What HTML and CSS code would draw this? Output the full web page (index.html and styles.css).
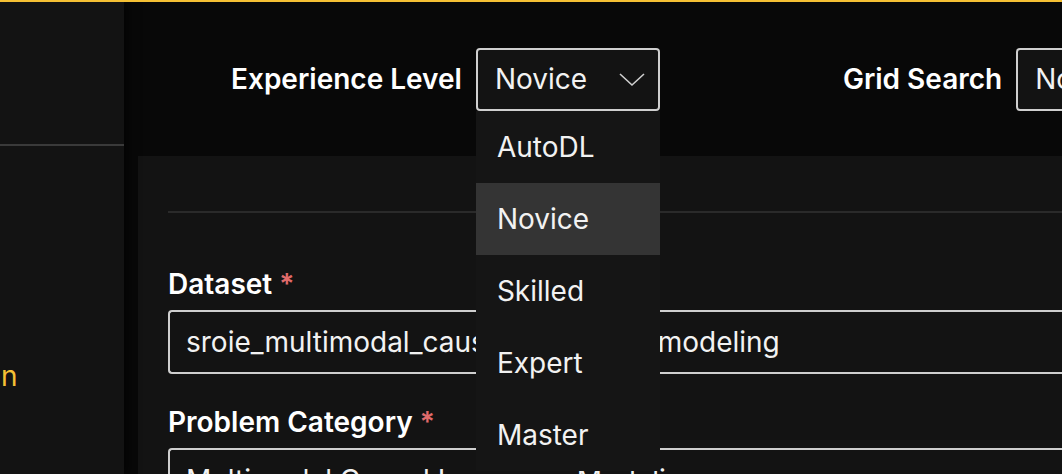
FILE: index.html
```html
<!DOCTYPE html>
<html lang="en">
<head>
  <meta charset="UTF-8">
  <title>Create Experiment</title>
  <link rel="stylesheet" href="styles.css">
</head>
<body>
  <div class="app">
    <aside class="sidebar">
      <div class="brand"></div>
      <nav class="nav">
        <div class="nav-item active"><span>n</span></div>
      </nav>
    </aside>

    <main class="main">
      <header class="toolbar">
        <div class="control">
          <label class="control-label">Experience Level</label>
          <div class="select open">
            <span>Novice</span>
            <svg class="chevron" width="26" height="14" viewBox="0 0 26 14">
              <path d="M1 1 L13 12 L25 1" fill="none" stroke="#cfcfcf" stroke-width="1.6"/>
            </svg>
            <ul class="menu">
              <li>AutoDL</li>
              <li class="selected">Novice</li>
              <li>Skilled</li>
              <li>Expert</li>
              <li>Master</li>
            </ul>
          </div>
        </div>
        <div class="control">
          <label class="control-label">Grid Search</label>
          <div class="select">
            <span>No</span>
          </div>
        </div>
      </header>

      <section class="card">
        <hr class="divider">
        <div class="field">
          <label>Dataset <span class="req">*</span></label>
          <div class="input">sroie_multimodal_causal_language_modeling</div>
        </div>
        <div class="field">
          <label>Problem Category <span class="req">*</span></label>
          <div class="input">Multimodal Causal Language Modeling</div>
        </div>
      </section>
    </main>
  </div>
</body>
</html>
```

FILE: styles.css
```css
* {
  box-sizing: border-box;
}
html, body {
  height: 100%;
}
body {
  margin: 0;
  font-family: Inter, "Noto Sans", sans-serif;
  background: #080808;
  color: #f2f2f2;
  border-top: 2px solid #f5c034;
  overflow: hidden;
}
.app {
  display: flex;
  height: 100%;
}
.sidebar {
  width: 124px;
  flex-shrink: 0;
  background: #131313;
  box-shadow: 4px 0 10px rgba(0,0,0,0.6);
  position: relative;
  z-index: 1;
}
.brand {
  height: 144px;
  border-bottom: 2px solid #3a3a3a;
}
.nav {
  padding-top: 212px;
}
.nav-item {
  font-size: 28px;
  line-height: 36px;
  color: #f5c034;
  padding-left: 1px;
}
.main {
  flex: 1;
  min-width: 0;
  display: flex;
  flex-direction: column;
}
.toolbar {
  flex-shrink: 0;
  height: 154px;
  display: flex;
  align-items: center;
  gap: 183px;
  padding-left: 107px;
  white-space: nowrap;
  position: relative;
  z-index: 2;
}
.control {
  display: flex;
  align-items: center;
  gap: 14px;
}
.control-label {
  font-size: 28px;
  font-weight: 600;
  color: #fff;
}
.select {
  position: relative;
  width: 184px;
  height: 63px;
  border: 2px solid #cfcfcf;
  border-radius: 4px;
  background: #131313;
  display: flex;
  align-items: center;
  justify-content: space-between;
  padding: 0 13px 0 17px;
  font-size: 28px;
  color: #f2f2f2;
}
.chevron {
  display: block;
  margin-top: 1px;
}
.menu {
  position: absolute;
  top: 61px;
  left: -2px;
  width: 184px;
  margin: 0;
  padding: 0;
  list-style: none;
  background: #151515;
}
.menu li {
  height: 72px;
  line-height: 72px;
  padding-left: 21px;
}
.menu li.selected {
  background: #343434;
}
.card {
  flex-shrink: 0;
  flex-grow: 1;
  margin-left: 14px;
  background: #131313;
  padding: 55px 0 0 30px;
}
.divider {
  margin: 0;
  border: none;
  height: 2px;
  background: #2a2a2a;
}
.field {
  margin-top: 53px;
}
.field + .field {
  margin-top: 30px;
}
.field label {
  display: block;
  font-size: 28px;
  line-height: 36px;
  font-weight: 600;
  color: #fff;
  margin-bottom: 8px;
}
.req {
  color: #e06b6b;
}
.input {
  height: 64px;
  border: 2px solid #cfcfcf;
  border-right: none;
  border-radius: 4px 0 0 4px;
  display: flex;
  align-items: center;
  padding-left: 16px;
  font-size: 28px;
  color: #f2f2f2;
  white-space: nowrap;
}
```
